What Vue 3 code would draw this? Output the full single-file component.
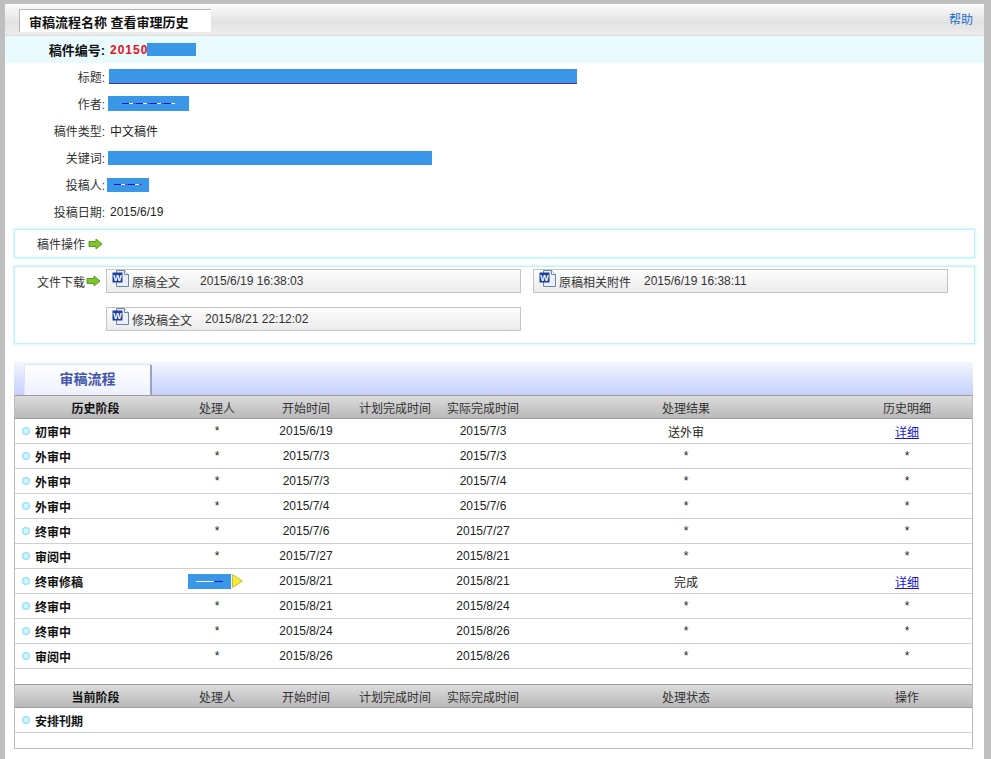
<script setup>
const infoRows = [
  { label: '标题:', block: 'title' },
  { label: '作者:', block: 'author' },
  { label: '稿件类型:', text: '中文稿件' },
  { label: '关键词:', block: 'keyword' },
  { label: '投稿人:', block: 'person' },
  { label: '投稿日期:', text: '2015/6/19' }
]

const history = [
  ['初审中', '*', '2015/6/19', '2015/7/3', '送外审', '详细'],
  ['外审中', '*', '2015/7/3', '2015/7/3', '*', '*'],
  ['外审中', '*', '2015/7/3', '2015/7/4', '*', '*'],
  ['外审中', '*', '2015/7/4', '2015/7/6', '*', '*'],
  ['终审中', '*', '2015/7/6', '2015/7/27', '*', '*'],
  ['审阅中', '*', '2015/7/27', '2015/8/21', '*', '*'],
  ['终审修稿', 'hidden', '2015/8/21', '2015/8/21', '完成', '详细'],
  ['终审中', '*', '2015/8/21', '2015/8/24', '*', '*'],
  ['终审中', '*', '2015/8/24', '2015/8/26', '*', '*'],
  ['审阅中', '*', '2015/8/26', '2015/8/26', '*', '*']
]
</script>

<template>
  <div class="page">
    <div class="topbar">
      <div class="title-tab">审稿流程名称 查看审理历史</div>
      <a class="help">帮助</a>
    </div>
    <div class="number-band">
      <span class="number-label">稿件编号:</span>
      <span class="number-val">2015</span><span class="number-val zero">0</span><span class="redact number-block"></span>
    </div>
    <div class="info">
      <div v-for="row in infoRows" :key="row.label" class="info-row">
        <span class="info-label">{{ row.label }}</span>
        <span v-if="row.text" class="info-text">{{ row.text }}</span>
        <span v-else :class="['redact', row.block]">
          <i v-if="row.block === 'author' || row.block === 'person'" class="scribble"></i>
        </span>
      </div>
    </div>

    <div class="glow-box ops">
      <span class="box-label">稿件操作</span>
      <svg class="arrow" width="15" height="12" viewBox="0 0 15 12"><path d="M1 3.5h7V1l6 5-6 5V8.500H1z" fill="#7cc52c" stroke="#5a9a1c" stroke-width="1"/></svg>
    </div>

    <div class="glow-box files">
      <div class="files-head">
        <span class="box-label">文件下载</span>
        <svg class="arrow" width="15" height="12" viewBox="0 0 15 12"><path d="M1 3.5h7V1l6 5-6 5V8.500H1z" fill="#7cc52c" stroke="#5a9a1c" stroke-width="1"/></svg>
      </div>
      <div class="file-grid">
        <div class="file-btn">
          <svg class="doc" width="17" height="18" viewBox="0 0 17 18"><path d="M4.500 .5h8l4 4v12h-12z" fill="#e8f0fa" stroke="#6a86b0"/><path d="M12.500 .5v4h4" fill="#fff" stroke="#6a86b0"/><rect x=".5" y="2.500" width="10" height="10" fill="#1e3f9a"/><text x="1.200" y="10.500" font-size="9" font-weight="700" fill="#fff" font-family="Liberation Sans">W</text></svg>
          <span class="file-name">原稿全文</span><span class="file-date wide">2015/6/19 16:38:03</span>
        </div>
        <div class="file-btn">
          <svg class="doc" width="17" height="18" viewBox="0 0 17 18"><path d="M4.500 .5h8l4 4v12h-12z" fill="#e8f0fa" stroke="#6a86b0"/><path d="M12.500 .5v4h4" fill="#fff" stroke="#6a86b0"/><rect x=".5" y="2.500" width="10" height="10" fill="#1e3f9a"/><text x="1.200" y="10.500" font-size="9" font-weight="700" fill="#fff" font-family="Liberation Sans">W</text></svg>
          <span class="file-name">原稿相关附件</span><span class="file-date">2015/6/19 16:38:11</span>
        </div>
        <div class="file-btn">
          <svg class="doc" width="17" height="18" viewBox="0 0 17 18"><path d="M4.500 .5h8l4 4v12h-12z" fill="#e8f0fa" stroke="#6a86b0"/><path d="M12.500 .5v4h4" fill="#fff" stroke="#6a86b0"/><rect x=".5" y="2.500" width="10" height="10" fill="#1e3f9a"/><text x="1.200" y="10.500" font-size="9" font-weight="700" fill="#fff" font-family="Liberation Sans">W</text></svg>
          <span class="file-name">修改稿全文</span><span class="file-date">2015/8/21 22:12:02</span>
        </div>
      </div>
    </div>

    <div class="flow">
      <div class="flow-strip">
        <div class="flow-tab">审稿流程</div>
      </div>
      <div class="table">
        <div class="row head">
          <span class="stage-head">历史阶段</span>
          <span>处理人</span>
          <span>开始时间</span>
          <span>计划完成时间</span>
          <span>实际完成时间</span>
          <span>处理结果</span>
          <span>历史明细</span>
        </div>
        <div v-for="(item, i) in history" :key="i" class="row body">
          <span class="stage"><i class="dot"></i>{{ item[0] }}</span>
          <span v-if="item[1] === 'hidden'" class="handler">
            <span class="redact handler-block"><i class="scribble short"></i></span>
            <svg class="flag" width="11" height="14" viewBox="0 0 11 14"><path d="M.5 .5L10.500 7 .5 13.500z" fill="#f2ee3a" stroke="#c9bd3a"/></svg>
          </span>
          <span v-else>{{ item[1] }}</span>
          <span>{{ item[2] }}</span>
          <span></span>
          <span>{{ item[3] }}</span>
          <span>{{ item[4] }}</span>
          <span><a v-if="item[5] === '详细'" class="detail">详细</a><template v-else>{{ item[5] }}</template></span>
        </div>
        <div class="row spacer"></div>
        <div class="row head">
          <span class="stage-head">当前阶段</span>
          <span>处理人</span>
          <span>开始时间</span>
          <span>计划完成时间</span>
          <span>实际完成时间</span>
          <span>处理状态</span>
          <span>操作</span>
        </div>
        <div class="row body">
          <span class="stage"><i class="dot"></i>安排刊期</span>
        </div>
        <div class="row spacer last"></div>
      </div>
    </div>
  </div>
</template>

<style>
html, body {
  margin: 0;
  background: #bfbfbf;
  overflow: hidden;
}
</style>

<style scoped>
.page {
  margin: 4px 7px 0 5px;
  height: 755px;
  overflow: hidden;
  background: #fff;
  font-family: "Liberation Sans", "Noto Sans CJK SC", sans-serif;
  font-size: 12px;
  color: #222;
}

.topbar {
  height: 32px;
  box-sizing: border-box;
  display: flex;
  align-items: flex-end;
  justify-content: space-between;
  padding: 0 11px 0 14px;
  background: linear-gradient(#fbfbfb, #e2e2e2 60%, #ececec);
  border-bottom: 1px solid #d8dcdc;
}

.title-tab {
  width: 192px;
  height: 23px;
  margin-bottom: 3px;
  box-sizing: border-box;
  border-top: 1px solid #b5b5b5;
  border-left: 1px solid #b5b5b5;
  background: #fff;
  padding-left: 9px;
  font-size: 13px;
  font-weight: 700;
  line-height: 25px;
  color: #111;
}

.help {
  color: #1a6fd0;
  line-height: 16px;
  margin-bottom: 7px;
}

.number-band {
  height: 27px;
  display: flex;
  align-items: center;
  background: #e9fbff;
  font-weight: 700;
}

.number-label {
  width: 100px;
  text-align: right;
  font-size: 13px;
  color: #111;
}

.number-val {
  color: #e8101c;
  letter-spacing: 1px;
  font-size: 12px;
}

.number-val:first-of-type {
  margin-left: 0;
}

.number-label + .number-val {
  margin-left: 5px;
}

.number-block {
  width: 49px;
  height: 13px;
  margin-left: -1px;
}

.redact {
  display: inline-flex;
  align-items: center;
  justify-content: center;
  background: #3a96e6;
}

.info {
  padding-top: 0;
}

.info-row {
  height: 27px;
  display: flex;
  align-items: center;
}

.info-label {
  width: 100px;
  text-align: right;
  color: #333;
}

.info-text {
  margin-left: 5px;
}

.title {
  width: 468px;
  height: 14px;
  margin-left: 4px;
  border-bottom: 1px solid #5b2a9c;
}

.author {
  width: 81px;
  height: 15px;
  margin-left: 3px;
}

.keyword {
  width: 324px;
  height: 14px;
  margin-left: 3px;
}

.person {
  width: 42px;
  height: 14px;
  margin-left: 2px;
}

.scribble {
  display: block;
  width: 66%;
  height: 1px;
  background: repeating-linear-gradient(90deg, #1414d8 0 7px, #fff 7px 11px, #6a3fc0 11px 14px);
}

.scribble.short {
  width: 62%;
  background: linear-gradient(90deg, #fff 0 65%, #1414d8 65% 100%);
}

.glow-box {
  margin-left: 9px;
  width: 961px;
  box-sizing: border-box;
  border: 1px solid #bff2f7;
  box-shadow: 0 0 2px 1px #d5f7fb;
  display: flex;
}

.ops {
  margin-top: 4px;
  height: 29px;
  align-items: center;
  padding-left: 22px;
}

.box-label {
  color: #333;
}

.arrow {
  margin-left: 1px;
  flex: none;
}

.ops .arrow {
  margin-left: 3px;
}

.files {
  margin-top: 8px;
  height: 78px;
  padding: 2px 0 0 22px;
}

.files-head {
  width: 69px;
  height: 24px;
  flex: none;
  display: flex;
  align-items: center;
}

.file-grid {
  display: grid;
  grid-template-columns: 415px 415px;
  grid-auto-rows: 24px;
  column-gap: 12px;
  row-gap: 14px;
}

.file-btn {
  display: flex;
  align-items: center;
  box-sizing: border-box;
  border: 1px solid #c4c4c4;
  background: linear-gradient(#fdfdfd, #ebebeb);
  padding-left: 5px;
  color: #333;
}

.doc {
  margin: -4px 3px 0 0;
  flex: none;
}

.file-date {
  margin-left: 13px;
}

.file-date.wide {
  margin-left: 20px;
}

.flow {
  margin: 18px 0 0 9px;
  width: 959px;
}

.flow-strip {
  height: 33px;
  box-sizing: border-box;
  padding: 2px 0 0 10px;
  background: linear-gradient(#f3f5ff, #c6d0fb);
}

.flow-tab {
  width: 128px;
  height: 31px;
  box-sizing: border-box;
  border-top: 1px solid #dfe4f5;
  border-right: 2px solid #9aa3c0;
  border-left: 1px solid #dfe4f5;
  border-radius: 2px 2px 0 0;
  background: linear-gradient(#fff, #eef1fe);
  text-align: center;
  font-size: 14px;
  font-weight: 700;
  line-height: 29px;
  color: #4355ac;
}

.table {
  border-left: 1px solid #bcbcbc;
  border-right: 1px solid #bcbcbc;
  border-bottom: 1px solid #bcbcbc;
}

.row {
  display: grid;
  grid-template-columns: 161px 82px 96px 82px 94px 312px 1fr;
  box-sizing: border-box;
  align-items: center;
  text-align: center;
}

.head {
  height: 24px;
  background: linear-gradient(#dcdcdc, #b9b9b9);
  border-top: 1px solid #9c9c9c;
  border-bottom: 1px solid #9c9c9c;
  color: #333;
}

.stage-head {
  font-weight: 700;
  color: #111;
}

.body {
  height: 25px;
  border-bottom: 1px solid #cfcfcf;
  color: #222;
}

.stage {
  display: flex;
  align-items: center;
  padding-left: 7px;
  font-weight: 700;
  color: #111;
  text-align: left;
}

.dot {
  width: 8px;
  height: 8px;
  margin-right: 5px;
  border-radius: 50%;
  background: radial-gradient(circle, #d2f6ff 0 30%, #58c6ee 100%);
}

.handler {
  display: flex;
  align-items: center;
  padding-left: 12px;
}

.handler-block {
  width: 43px;
  height: 15px;
}

.flag {
  margin-left: 1px;
}

.detail {
  color: #1414d8;
  text-decoration: underline;
}

.spacer {
  height: 15px;
}

.last {
  height: 15px;
}
</style>
